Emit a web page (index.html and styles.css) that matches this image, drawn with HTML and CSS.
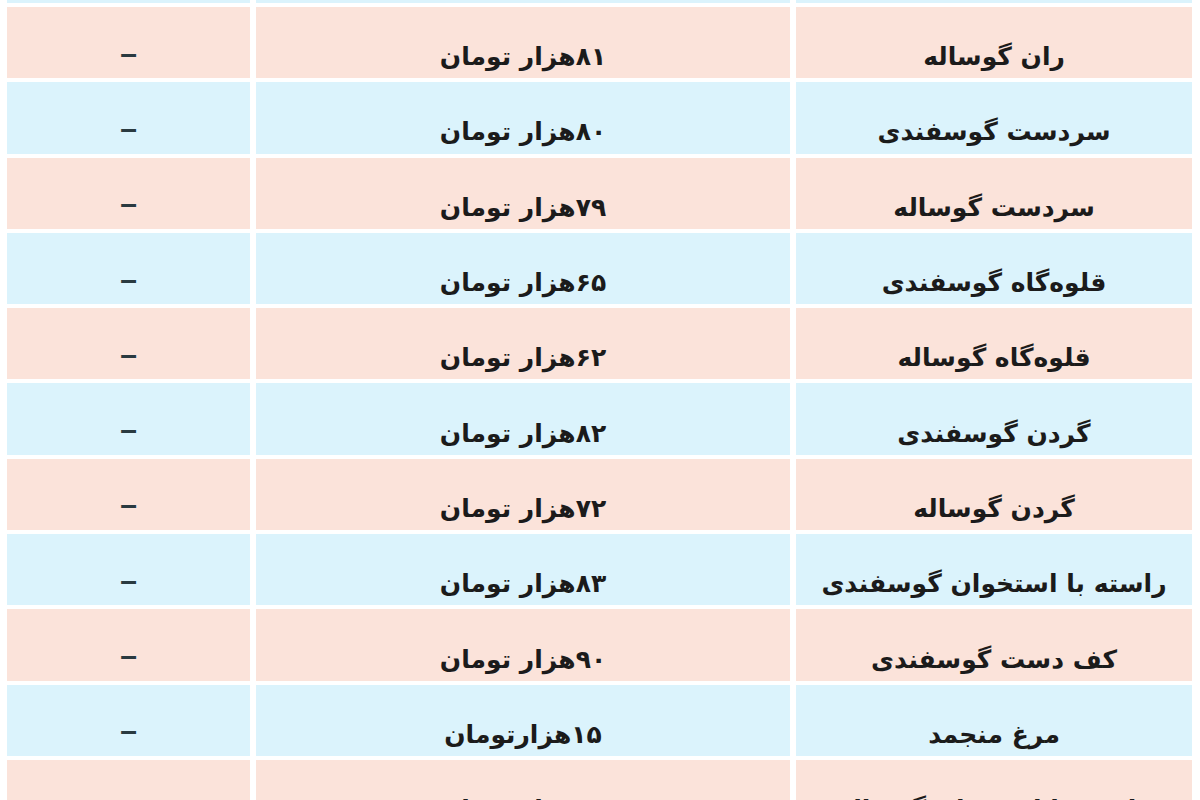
FILE: index.html
```html
<!DOCTYPE html>
<html lang="fa" dir="rtl">
<head>
<meta charset="utf-8">
<title>قیمت گوشت</title>
<link rel="stylesheet" href="styles.css">
</head>
<body>
<div class="table">
  <div class="cell blue sliver"></div><div class="cell blue sliver"></div><div class="cell blue sliver"></div>

  <div class="cell pink">ران گوساله</div><div class="cell pink">۸۱هزار تومان</div><div class="cell pink dash">–</div>
  <div class="cell blue">سردست گوسفندی</div><div class="cell blue">۸۰هزار تومان</div><div class="cell blue dash">–</div>
  <div class="cell pink">سردست گوساله</div><div class="cell pink">۷۹هزار تومان</div><div class="cell pink dash">–</div>
  <div class="cell blue">قلوه‌گاه گوسفندی</div><div class="cell blue">۶۵هزار تومان</div><div class="cell blue dash">–</div>
  <div class="cell pink">قلوه‌گاه گوساله</div><div class="cell pink">۶۲هزار تومان</div><div class="cell pink dash">–</div>
  <div class="cell blue">گردن گوسفندی</div><div class="cell blue">۸۲هزار تومان</div><div class="cell blue dash">–</div>
  <div class="cell pink">گردن گوساله</div><div class="cell pink">۷۲هزار تومان</div><div class="cell pink dash">–</div>
  <div class="cell blue">راسته با استخوان گوسفندی</div><div class="cell blue">۸۳هزار تومان</div><div class="cell blue dash">–</div>
  <div class="cell pink">کف دست گوسفندی</div><div class="cell pink">۹۰هزار تومان</div><div class="cell pink dash">–</div>
  <div class="cell blue">مرغ منجمد</div><div class="cell blue">۱۵هزارتومان</div><div class="cell blue dash">–</div>
  <div class="cell pink">راسته با استخوان گوساله</div><div class="cell pink">۹۲هزار تومان</div><div class="cell pink dash">–</div>
</div>
</body>
</html>
```

FILE: styles.css
```css
html, body {
  margin: 0;
  padding: 0;
  background: #ffffff;
  width: 1200px;
  height: 800px;
  overflow: hidden;
}

.table {
  display: grid;
  grid-template-columns: 396px 534px 243px;
  grid-template-rows: 3px;
  grid-auto-rows: 71.3px;
  column-gap: 6px;
  row-gap: 4px;
  padding: 0 8px 0 7px;
  font-family: "DejaVu Sans", "Noto Sans", sans-serif;
  font-weight: bold;
  font-size: 25px;
  color: #1b1b1b;
}

.cell {
  display: flex;
  align-items: center;
  justify-content: center;
  padding-top: 28px;
  box-sizing: border-box;
  white-space: nowrap;
  overflow: hidden;
}

.sliver {
  padding: 0;
}

.pink {
  background: #fbe3da;
}

.blue {
  background: #dbf3fc;
}

.dash {
  font-family: "Liberation Sans", sans-serif;
  font-size: 30px;
  color: #2a3a40;
  padding-top: 22px;
}
```
